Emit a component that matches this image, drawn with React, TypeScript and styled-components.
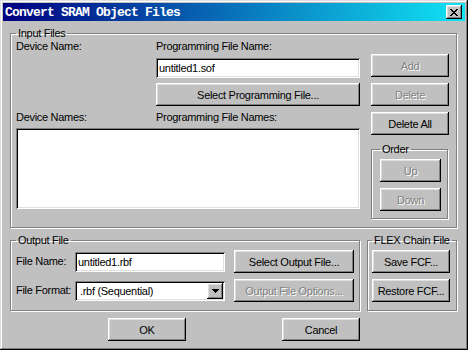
import styled, {createGlobalStyle} from "styled-components";

const GlobalStyle = createGlobalStyle`
  html, body {
    margin: 0;
    padding: 0;
    background: #c0c0c0;
  }
`;

const raised = `
  box-shadow: inset -1px -1px #000, inset 1px 1px #fff,
    inset -2px -2px #808080, inset 2px 2px #dfdfdf;
`;
const sunken = `
  box-shadow: inset 1px 1px #808080, inset -1px -1px #fff,
    inset 2px 2px #000, inset -2px -2px #dfdfdf;
`;

const Window = styled.div`
  width: 468px;
  height: 350px;
  box-sizing: border-box;
  padding: 3px;
  background: #c0c0c0;
  box-shadow: inset -1px -1px #000, inset 1px 1px #dfdfdf,
    inset -2px -2px #808080, inset 2px 2px #fff;
  display: flex;
  flex-direction: column;
  overflow: hidden;
  font-family: "Liberation Sans", Arial, sans-serif;
  font-size: 11px;
  font-weight: normal;
  letter-spacing: -0.3px;
  color: #000;
`;

const TitleBar = styled.div`
  flex-shrink: 0;
  height: 18px;
  display: flex;
  align-items: center;
  justify-content: space-between;
  padding: 0 3px 0 2px;
  background: linear-gradient(to right, #000080, #10e4f4);
`;

const Title = styled.span`
  color: #fff;
  font-family: "Liberation Mono", "Courier New", monospace;
  font-weight: bold;
  font-size: 13px;
  letter-spacing: -0.8px;
`;

const CloseButton = styled.button`
  width: 16px;
  height: 14px;
  padding: 0;
  border: none;
  background: #c0c0c0;
  display: flex;
  align-items: center;
  justify-content: center;
  ${raised}
`;

const Body = styled.div`
  flex-shrink: 0;
  display: flex;
  flex-direction: column;
  padding: 0 7px;
`;

const Group = styled.fieldset<{$w: number; $pad: string}>`
  margin: 0;
  min-width: 0;
  box-sizing: border-box;
  width: ${(p) => p.$w}px;
  padding: ${(p) => p.$pad};
  border: 1px solid #808080;
  box-shadow: inset 1px 1px #fff, 1px 1px #fff;
`;

const Legend = styled.legend`
  padding: 0 2px;
  line-height: 13px;
  font-size: 11px;
  white-space: nowrap;
`;

const InputGroup = styled(Group)`
  margin-top: 6px;
  display: flex;
  gap: 11px;
`;

const LeftArea = styled.div`
  display: grid;
  grid-template-columns: 140px 204px;
  row-gap: 5px;
  align-content: start;
`;

const Label = styled.div`
  line-height: 13px;
  white-space: nowrap;
`;

const TextField = styled.input<{$w?: number}>`
  box-sizing: border-box;
  width: ${(p) => (p.$w ? `${p.$w}px` : "100%")};
  height: 20px;
  border: none;
  outline: none;
  margin: 0;
  padding: 0 3px;
  background: #fff;
  font: inherit;
  letter-spacing: inherit;
  color: #000;
  ${sunken}
`;

const ListBox = styled.div`
  grid-column: 1 / 3;
  height: 81px;
  margin-top: -1px;
  background: #fff;
  ${sunken}
`;

const Button = styled.button<{$w?: number; $disabled?: boolean}>`
  box-sizing: border-box;
  width: ${(p) => (p.$w ? `${p.$w}px` : "100%")};
  height: 23px;
  padding: 0;
  border: none;
  background: #c0c0c0;
  font: inherit;
  font-weight: normal;
  letter-spacing: inherit;
  white-space: nowrap;
  color: ${(p) => (p.$disabled ? "#808080" : "#000")};
  text-shadow: ${(p) => (p.$disabled ? "1px 1px #fff" : "none")};
  ${raised}
`;

const RightColumn = styled.div`
  width: 78px;
  padding-top: 14px;
  display: flex;
  flex-direction: column;
  gap: 6px;
`;

const OrderGroup = styled(Group)`
  margin-top: 2px;
  display: flex;
  flex-direction: column;
  gap: 6px;
`;

const BottomRow = styled.div`
  margin-top: 6px;
  display: flex;
  gap: 7px;
`;

const OutputGrid = styled.div`
  display: grid;
  grid-template-columns: 59px 150px 1fr;
  grid-auto-rows: 23px;
  row-gap: 6px;
  align-items: center;
  & > button {
    justify-self: end;
  }
`;

const FlexGroup = styled(Group)`
  display: flex;
  flex-direction: column;
  gap: 6px;
`;

const Combo = styled.div`
  box-sizing: border-box;
  width: 150px;
  height: 20px;
  padding: 2px 2px 2px 5px;
  background: #fff;
  display: flex;
  align-items: center;
  justify-content: space-between;
  ${sunken}
`;

const ComboArrow = styled.div`
  width: 16px;
  height: 16px;
  background: #c0c0c0;
  display: flex;
  align-items: center;
  justify-content: center;
  ${raised}
`;

const DialogButtons = styled.div`
  margin-top: 7px;
  padding-left: 98px;
  display: flex;
  gap: 96px;
`;

const closeRows = ["11000011", "01100110", "00111100", "00011000", "00111100", "01100110", "11000011"];

function CloseIcon() {
  return (
    <svg width="8" height="7" viewBox="0 0 8 7" shapeRendering="crispEdges">
      {closeRows.flatMap((row, y) =>
        row.split("").map((c, x) => (c === "1" ? <rect key={`${x}-${y}`} x={x} y={y} width="1" height="1" fill="#000" /> : null))
      )}
    </svg>
  );
}

function ArrowIcon() {
  return (
    <svg width="7" height="4" viewBox="0 0 7 4" shapeRendering="crispEdges">
      <path d="M0 0h7v1h-1v1h-1v1h-1v1h-1v-1h-1v-1h-1v-1h-1z" fill="#000" />
    </svg>
  );
}

export default function App() {
  return (
    <>
      <GlobalStyle />
      <Window>
        <TitleBar>
          <Title>Convert SRAM Object Files</Title>
          <CloseButton aria-label="Close">
            <CloseIcon />
          </CloseButton>
        </TitleBar>
        <Body>
          <InputGroup $w={447} $pad="0 7px 8px 5px">
            <Legend>Input Files</Legend>
            <LeftArea>
              <Label>Device Name:</Label>
              <Label>Programming File Name:</Label>
              <TextField style={{gridColumn: 2}} readOnly defaultValue="untitled1.sof" />
              <Button style={{gridColumn: 2}}>Select Programming File...</Button>
              <Label>Device Names:</Label>
              <Label>Programming File Names:</Label>
              <ListBox />
            </LeftArea>
            <RightColumn>
              <Button $disabled>Add</Button>
              <Button $disabled>Delete</Button>
              <Button>Delete All</Button>
              <OrderGroup $w={77} $pad="3px 6px 7px 8px">
                <Legend>Order</Legend>
                <Button $w={61} $disabled>Up</Button>
                <Button $w={61} $disabled>Down</Button>
              </OrderGroup>
            </RightColumn>
          </InputGroup>
          <BottomRow>
            <Group $w={350} $pad="3px 5px 8px 5px">
              <Legend>Output File</Legend>
              <OutputGrid>
                <Label>File Name:</Label>
                <TextField readOnly defaultValue="untitled1.rbf" />
                <Button $w={120}>Select Output File...</Button>
                <Label>File Format:</Label>
                <Combo>
                  <span>.rbf (Sequential)</span>
                  <ComboArrow>
                    <ArrowIcon />
                  </ComboArrow>
                </Combo>
                <Button $w={120} $disabled>Output File Options...</Button>
              </OutputGrid>
            </Group>
            <FlexGroup $w={90} $pad="3px 6px 8px 4px">
              <Legend>FLEX Chain File</Legend>
              <Button $w={78}>Save FCF...</Button>
              <Button $w={78}>Restore FCF...</Button>
            </FlexGroup>
          </BottomRow>
          <DialogButtons>
            <Button $w={78}>OK</Button>
            <Button $w={78}>Cancel</Button>
          </DialogButtons>
        </Body>
      </Window>
    </>
  );
}
